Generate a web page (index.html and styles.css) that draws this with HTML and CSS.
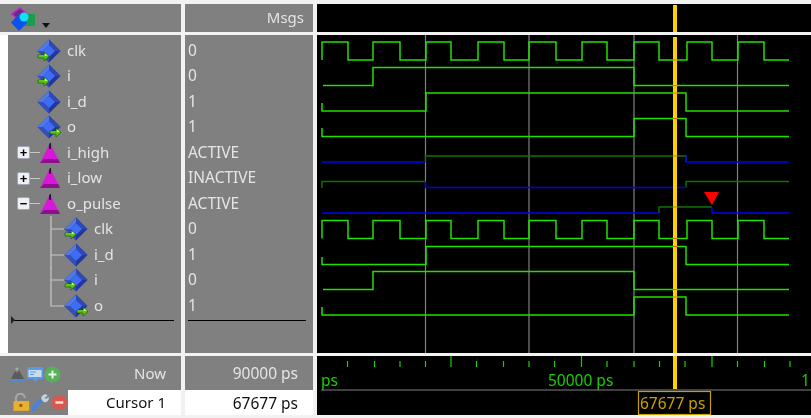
FILE: index.html
```html
<!DOCTYPE html>
<html>
<head>
    <title>Wave</title>
    <link rel="stylesheet" href="styles.css">
</head>
<body>
    <svg class="icon-defs" width="0" height="0">
        <defs>
            <g id="diamond">
                <polygon points="12,0.5 23.5,12 12,23.5 0.5,12" fill="#24369c"/>
                <polygon points="12,0.5 0.5,12 6,12 12,6" fill="#4f7ae4"/>
                <polygon points="12,0.5 12,6 18,12 23.5,12" fill="#2f48b4"/>
                <polygon points="0.5,12 12,23.5 12,18 6,12" fill="#3450b8"/>
                <polygon points="12,6 18,12 12,18 6,12" fill="#3f6cf4"/>
            </g>
            <g id="arrow">
                <path d="M0 3h6V0l5 4.5-5 4.5V6H0z" fill="#4ccc08" stroke="#123a00" stroke-width=".5"/>
                <path d="M1 3.6h6V1.6l3 2.2H1z" fill="#e8ff70"/>
            </g>
            <symbol id="sig" viewBox="0 0 24 24"><use href="#diamond"/></symbol>
            <symbol id="sig-in" viewBox="0 0 24 24"><use href="#diamond"/><use href="#arrow" x="1" y="13"/></symbol>
            <symbol id="sig-out" viewBox="0 0 24 24"><use href="#diamond"/><use href="#arrow" x="13" y="13"/></symbol>
            <symbol id="group" viewBox="0 0 20 20">
                <polygon points="10,0 20,20 0,20" fill="#d818d8"/>
                <polygon points="10,0 11,0 11,6 9,6 9,2" fill="#301030"/>
                <polygon points="0,20 20,20 18,16 4,16" fill="#8c108c"/>
            </symbol>
            <symbol id="branch" viewBox="0 0 14 26"><path d="M1 -4V30M1 13H14" fill="none" stroke="#c8c8c8" stroke-width="1.2"/></symbol>
            <symbol id="branch-end" viewBox="0 0 14 26"><path d="M1 -4V13H14" fill="none" stroke="#c8c8c8" stroke-width="1.2"/></symbol>
        </defs>
    </svg>

    <div class="wave-window">
        <!-- header row -->
        <div class="head-names">
            <svg class="logo" width="25" height="24" viewBox="0 0 25 24">
                <polygon points="9,1 16,7 7,12 1,7" fill="#6a2a80" stroke="#c020d0" stroke-width="1.6"/>
                <rect x="12" y="7" width="12" height="12" fill="#1c9c4c"/>
                <polygon points="8,7 16.5,15.5 8,24 0,15.5" fill="#0c50f0"/>
                <circle cx="13" cy="10" r="4.5" fill="#10e0f8"/>
            </svg>
            <span class="drop-arrow"></span>
        </div>
        <div class="head-msgs">Msgs</div>
        <div class="head-wave">
            <svg class="canvas" viewBox="317 4 494 28">
                <rect x="673" y="5" width="4" height="27" fill="#ffd000"/>
            </svg>
        </div>

        <!-- signal tree, values, waves -->
        <div class="names-col">
            <div class="tree">
                <div class="row top"><svg class="sig"><use href="#sig-in"/></svg>clk</div>
                <div class="row top"><svg class="sig"><use href="#sig-in"/></svg>i</div>
                <div class="row top"><svg class="sig"><use href="#sig"/></svg>i_d</div>
                <div class="row top"><svg class="sig"><use href="#sig-out"/></svg>o</div>
                <div class="row grp"><span class="toggle">+</span><span class="stub"></span><svg class="tri"><use href="#group"/></svg>i_high</div>
                <div class="row grp"><span class="toggle">+</span><span class="stub"></span><svg class="tri"><use href="#group"/></svg>i_low</div>
                <div class="row grp"><span class="toggle">&minus;</span><span class="stub"></span><svg class="tri"><use href="#group"/></svg>o_pulse</div>
                <div class="row child"><svg class="link"><use href="#branch"/></svg><svg class="sig"><use href="#sig-in"/></svg>clk</div>
                <div class="row child"><svg class="link"><use href="#branch"/></svg><svg class="sig"><use href="#sig"/></svg>i_d</div>
                <div class="row child"><svg class="link"><use href="#branch"/></svg><svg class="sig"><use href="#sig-in"/></svg>i</div>
                <div class="row child"><svg class="link"><use href="#branch-end"/></svg><svg class="sig"><use href="#sig-out"/></svg>o</div>
                <div class="rule rule-names"></div>
            </div>
        </div>
        <div class="values-col">
            <div class="row">0</div>
            <div class="row">0</div>
            <div class="row">1</div>
            <div class="row">1</div>
            <div class="row">ACTIVE</div>
            <div class="row">INACTIVE</div>
            <div class="row">ACTIVE</div>
            <div class="row">0</div>
            <div class="row">1</div>
            <div class="row">0</div>
            <div class="row">1</div>
            <div class="rule"></div>
        </div>
        <div class="waves-col">
            <svg class="canvas" viewBox="317 35 494 318">
                <g class="grid-lines">
                    <path d="M425.5 35V353M529 35V353M634 35V353M737.5 35V353"/>
                </g>
                <g class="wave">
                    <polyline points="322,60 322,42 348,42 348,60 373,60 373,42 400,42 400,60 426,60 426,42 451,42 451,60 478,60 478,42 504,42 504,60 529,60 529,42 556,42 556,60 582,60 582,42 607,42 607,60 634,60 634,42 659,42 659,60 687,60 687,42 712,42 712,60 738,60 738,42 764,42 764,60 789,60"/>
                    <polyline points="323,85.5 373,85.5 373,67.5 634,67.5 634,85.5 789,85.5"/>
                    <polyline points="322,103 322,111 426,111 426,93 686,93 686,111 789,111"/>
                    <polyline points="322,128 322,136.5 634,136.5 634,118.5 686,118.5 686,136.5 789,136.5"/>
                    <polyline points="322,238.5 322,220.5 348,220.5 348,238.5 373,238.5 373,220.5 400,220.5 400,238.5 426,238.5 426,220.5 451,220.5 451,238.5 478,238.5 478,220.5 504,220.5 504,238.5 529,238.5 529,220.5 556,220.5 556,238.5 582,238.5 582,220.5 607,220.5 607,238.5 634,238.5 634,220.5 659,220.5 659,238.5 687,238.5 687,220.5 712,220.5 712,238.5 738,238.5 738,220.5 764,220.5 764,238.5 789,238.5"/>
                    <polyline points="322,257 322,264.5 426,264.5 426,246.5 686,246.5 686,264.5 789,264.5"/>
                    <polyline points="323,289.5 373,289.5 373,271.5 634,271.5 634,289.5 789,289.5"/>
                    <polyline points="322,307 322,315 634,315 634,297 686,297 686,315 789,315"/>
                </g>
                <g class="wave-dim">
                    <polyline points="425.5,162 425.5,156 686,156 686,162"/>
                    <polyline points="322,188 322,181.5 425.5,181.5"/>
                    <polyline points="686,187.5 686,181.5 789,181.5"/>
                    <polyline points="659,213 659,207 712,207"/>
                </g>
                <g class="wave-bus">
                    <polyline points="322,162 425.5,162"/>
                    <polyline points="686,156 686,162 789,162"/>
                    <polyline points="425.5,181.5 425.5,187.5 686,187.5"/>
                    <polyline points="322,213 659,213"/>
                    <polyline points="712,207 712,213 789,213"/>
                </g>
                <polygon points="704,192 719,192 712,205" fill="#ff0000"/>
                <rect x="673" y="37" width="4" height="316" fill="#ffd000"/>
                <path class="cross" d="M673 60h4M673 85.5h4M673 93h4M673 118.5h4M673 156h4M673 207h4M673 238.5h4M673 246.5h4M673 289.5h4M673 297h4"/>
            </svg>
        </div>

        <!-- footer: now and cursor -->
        <div class="foot-names">
            <div class="foot-row">
                <span class="tool-icons now-icons">
                    <svg width="17" height="17" viewBox="0 0 17 17">
                        <path d="M2 13L6 5l2 2 2-3 5 9z" fill="#5c5c5c"/>
                        <circle cx="8" cy="3" r="1.6" fill="#a8a8a8"/>
                        <path d="M0 12v3h17v-3h-1v2H1v-2z" fill="#5088d8"/>
                    </svg>
                    <svg width="18" height="17" viewBox="0 0 18 17">
                        <rect x="1" y="1" width="16" height="12" rx="1" fill="#5c98e4"/>
                        <rect x="2.5" y="4" width="13" height="7" fill="#c8dcf0"/>
                        <path d="M4 6h6M4 8.5h4" stroke="#5c98e4"/>
                        <path d="M7 13h5l-2.5 3z" fill="#5c98e4"/>
                    </svg>
                    <svg width="17" height="17" viewBox="0 0 17 17">
                        <circle cx="8.5" cy="8.5" r="8" fill="#58b058"/>
                        <path d="M8.5 4.5v8M4.5 8.5h8" stroke="#e8f8e8" stroke-width="2"/>
                    </svg>
                </span>
                <span class="foot-label">Now</span>
            </div>
            <div class="foot-row cursor-row">
                <span class="tool-icons cursor-icons">
                    <svg width="17" height="19" viewBox="0 0 17 19">
                        <path d="M3 8V5a4.5 4.5 0 0 1 9 0" fill="none" stroke="#a8a8a8" stroke-width="2"/>
                        <rect x="0.5" y="8" width="16" height="10" fill="#e8b030"/>
                        <rect x="6.5" y="11" width="3" height="3" fill="#8c6414"/>
                    </svg>
                    <svg width="18" height="19" viewBox="0 0 18 19">
                        <path d="M1 16l9-9" stroke="#4a82d8" stroke-width="4.5" stroke-linecap="round"/>
                        <path d="M10 7a4 4 0 0 1 6-5l-3 3 1 1 3-2a4 4 0 0 1-5 5z" fill="#c8d0dc"/>
                    </svg>
                    <svg width="17" height="17" viewBox="0 0 17 17">
                        <circle cx="8.5" cy="8.5" r="8" fill="#d85850"/>
                        <path d="M4.5 8.5h8" stroke="#f8e8e8" stroke-width="2.4"/>
                    </svg>
                </span>
                <span class="foot-label cursor-label">Cursor 1</span>
            </div>
        </div>
        <div class="foot-values">
            <div class="foot-row"><span class="foot-label">90000 ps</span></div>
            <div class="foot-row cursor-value"><span class="foot-label">67677 ps</span></div>
        </div>
        <div class="foot-wave">
            <svg class="canvas" viewBox="317 356 494 59">
                <path class="tick" d="M347.5 361v6M374.5 361v6M400 361v6M425.5 361v6M451 356v11M476.5 361v6M503.5 361v6M529 361v6M554.5 361v6M581.5 356v11M607 361v6M634 361v6M659.5 361v6M685 361v6M712 356v11M737.5 361v6M764.5 361v6M790 361v6"/>
                <text class="time" x="321" y="386">ps</text>
                <text class="time" x="548" y="386">50000 ps</text>
                <text class="time" x="801" y="386">1</text>
                <path class="axis" d="M321 390H811"/>
                <rect x="673" y="356" width="4" height="33" fill="#ffd000"/>
                <rect class="cursor-box" x="638.5" y="391.5" width="72" height="23"/>
                <text class="cursor-time" x="640" y="409">67677 ps</text>
            </svg>
        </div>
    </div>
</body>
</html>
```

FILE: styles.css
```css
html, body { margin: 0; height: 100%; overflow: hidden; }
body {
    background: #d6d6d6;
    font-family: "Noto Sans", sans-serif;
    font-size: 15px;
    color: #e4e4e4;
}
.icon-defs { display: block; height: 0; }

.wave-window {
    display: grid;
    grid-template-columns: 181px 128px 1fr;
    grid-template-rows: 28px 318px 59px;
    column-gap: 4px;
    row-gap: 3px;
    padding: 4px 0 3px;
    height: 411px;
    background: #f2f2f2;
    filter: blur(0.45px);
}
.canvas { display: block; width: 100%; height: 100%; }

.head-names, .head-msgs, .values-col, .foot-names .foot-row, .foot-values .foot-row, .tree { background: #808080; }
.head-names { display: flex; align-items: flex-start; padding: 3px 0 0 11px; }
.logo { flex: none; }
.drop-arrow {
    margin: 16px 0 0 6px;
    border-left: 4px solid transparent;
    border-right: 4px solid transparent;
    border-top: 5px solid #111;
}
.head-msgs { text-align: right; padding: 3px 9px 0 0; }
.head-wave, .waves-col, .foot-wave { background: #000; }

.names-col { background: #fff; padding-left: 8px; }
.tree { height: 100%; padding-top: 2px; box-sizing: border-box; }
.values-col { padding: 2px 0 0 3px; font-size: 15.5px; }
.row { display: flex; align-items: center; height: 25.5px; white-space: nowrap; }
.row.top { padding-left: 29px; }
.row.grp { padding-left: 9px; }
.row.child { padding-left: 42px; }
.sig { width: 24px; height: 24px; margin: 2px 6px 0 0; flex: none; }
.tri { width: 20px; height: 20px; margin: 2px 7px 0 0; flex: none; }
.link { width: 14px; height: 26px; margin-top: 2px; flex: none; overflow: visible; }
.link use { overflow: visible; }
.stub { width: 10px; height: 1px; margin-top: 2px; background: #c8c8c8; flex: none; }
.toggle {
    width: 13px;
    height: 13px;
    margin-top: 2px;
    background: #eef0f6;
    border: 1px solid #a0a8b8;
    border-radius: 2px;
    box-sizing: border-box;
    color: #000;
    font: bold 13px/11px "Liberation Sans", sans-serif;
    text-align: center;
    flex: none;
}
.rule { position: relative; height: 1px; width: 118px; margin: 2px 0 0; background: #000; }
.rule-names { width: 163px; margin-left: 3px; }
.rule-names::before {
    content: "";
    position: absolute;
    left: 0;
    top: -4px;
    border-left: 4px solid #222;
    border-top: 4px solid transparent;
    border-bottom: 4px solid transparent;
}

.grid-lines path { stroke: #808080; stroke-width: 1.2; fill: none; }
.wave polyline { fill: none; stroke: #22e000; stroke-width: 1.5; }
.wave-dim polyline { fill: none; stroke: #0c7400; stroke-width: 1.4; }
.wave-bus polyline { fill: none; stroke: #0000f0; stroke-width: 1.5; }
.cross { stroke: #ff6a00; stroke-width: 1.2; }

.foot-names, .foot-values { display: grid; grid-template-rows: 34px 25px; }
.foot-row { display: flex; align-items: center; justify-content: space-between; }
.foot-label { margin-left: auto; padding-right: 15px; font-size: 15px; }
.foot-values .foot-label { font-size: 15.5px; }
.tool-icons { display: flex; align-items: center; }
.now-icons { padding-left: 9px; margin-top: 2px; }
.cursor-icons { width: 55px; padding-left: 13px; gap: 2px; flex: none; }
.cursor-label, .cursor-value { color: #111; }
.cursor-label {
    flex: 1;
    align-self: stretch;
    text-align: right;
    line-height: 25px;
    background: #fff;
}
.foot-values .cursor-value { background: #fff; }

.tick { stroke: #18d000; stroke-width: 1.2; fill: none; }
.axis { stroke: #808080; stroke-width: 1; fill: none; }
.time { fill: #18d000; font-size: 15.5px; }
.cursor-box { fill: none; stroke: #c8a000; stroke-width: 1.2; }
.cursor-time { fill: #c8a000; font-size: 15.5px; }
```
